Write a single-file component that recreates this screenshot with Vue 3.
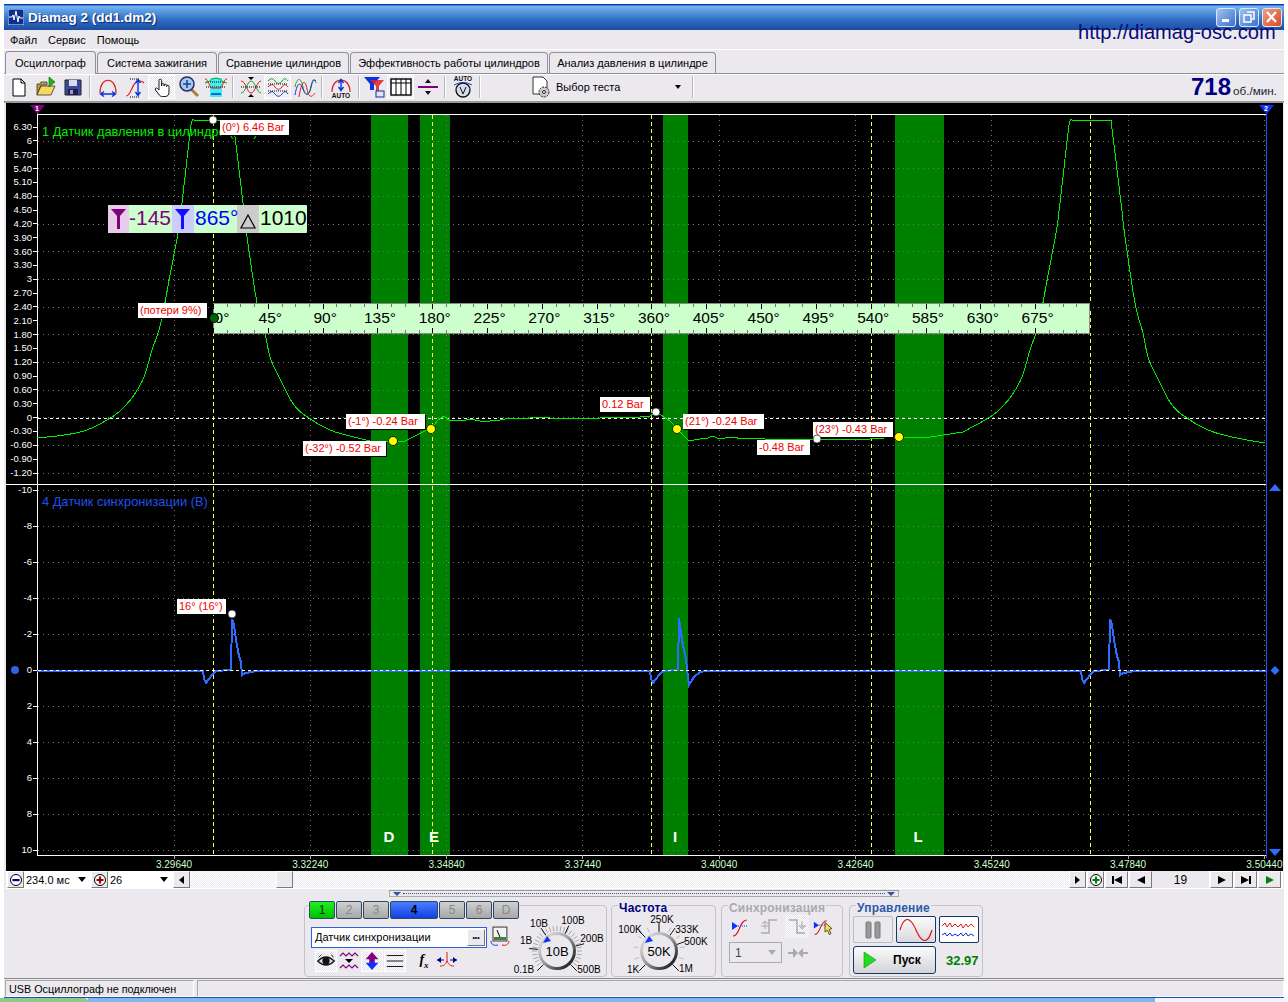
<script setup>
const yTop = ['6.30','6','5.70','5.40','5.10','4.80','4.50','4.20','3.90','3.60','3.30','3','2.70','2.40','2.10','1.80','1.50','1.20','0.90','0.60','0.30','0','-0.30','-0.60','-0.90','-1.20']
  .map((t, i) => ({ t, y: 127 + i * 13.84 }))
const yBot = [-10,-8,-6,-4,-2,0,2,4,6,8,10].map((v, i) => ({ t: String(v), y: 490 + i * 36 }))
const rows = [...Array(13).keys()].map(k => 141 + 27.68 * k).concat([...Array(11).keys()].map(k => 490 + 36 * k))
const xLabels = ['3.29640','3.32240','3.34840','3.37440','3.40040','3.42640','3.45240','3.47840','3.50440'].map((t, i) => ({ t, x: 174 + i * 136.3 }))
const bands = [
  { x: 371, w: 37, t: 'D', lx: 389 },
  { x: 420, w: 30, t: 'E', lx: 434 },
  { x: 663, w: 25, t: 'I', lx: 675 },
  { x: 895, w: 49, t: 'L', lx: 918 }
]
const cursors = [213, 432, 651, 871, 1090]

function smooth(pts) {
  const out = []
  for (let i = 0; i < pts.length - 1; i++) {
    const p0 = pts[Math.max(i - 1, 0)], p1 = pts[i], p2 = pts[i + 1], p3 = pts[Math.min(i + 2, pts.length - 1)]
    for (let s = 0; s < 5; s++) {
      const t = s / 5, t2 = t * t, t3 = t2 * t
      out.push([0, 1].map(c => 0.5 * (2 * p1[c] + (p2[c] - p0[c]) * t + (2 * p0[c] - 5 * p1[c] + 4 * p2[c] - p3[c]) * t2 + (3 * p1[c] - p0[c] - 3 * p2[c] + p3[c]) * t3)))
    }
  }
  out.push(pts[pts.length - 1])
  return out
}
const up = [[112,417],[124,407],[134,395],[144,377],[152,350],[157,336],[162,318],[170,275],[178,233],[182,203],[190,133],[192,121],[194,120]]
const down = [[233,120],[235,137],[243,203],[247,237],[257,303],[265,333],[270,357],[279,377],[294,405],[309,418],[330,430],[354,437],[370,441]]
const shift = (a, d) => a.map(([x, y]) => [x + d, y])
const mid = [[393,441],[405,441],[415,436],[425,431],[431,429],[438,420],[444,416],[450,421],[456,420],[462,421],[470,419],[480,421],[490,421],[500,420],[510,418],[520,419],[530,418],[540,417],[550,418],[580,419],[600,418],[620,417],[640,417],[650,416],[656,412],[664,417],[670,421],[677,428],[683,435],[689,441],[700,439],[708,438],[712,436],[720,439],[730,437],[745,439],[760,438],[765,439],[810,439],[840,439],[870,439],[899,437],[930,437],[963,432]]
const green = [
  ...smooth([[37,438],[64,435],[87,430], ...up]),
  ...smooth(down),
  ...mid,
  ...smooth([[963,432], ...shift(up, 878)]),
  ...smooth([...shift(down, 878).slice(0, 12), [1265,443]])
].map(p => p.map(v => v.toFixed(1)).join(',')).join(' ')
const p1 = [[203,671],[204,679],[206,683],[208,680],[213,674],[216,671],[230,670],[231,669],[232,619],[234,625],[236,640],[239,656],[241,662],[242,675],[245,673],[252,672],[256,671]]
const p2 = [[650,671],[651,679],[653,683],[655,680],[660,674],[663,671],[677,670],[678,669],[679,618],[682,640],[686,660],[689,685],[694,677],[700,672],[706,671]]
const p3 = p1.map(([x, y]) => [x + 878, y])
const blue = [[37,671], ...p1, ...p2, ...p3, [1266,671]].map(p => p.join(',')).join(' ')
const notes = [
  { t: '(0°) 6.46 Bar', x: 220, y: 120, w: 69 },
  { t: '(потери 9%)', x: 138, y: 303, w: 69 },
  { t: '(-1°) -0.24 Bar', x: 346, y: 414, w: 79 },
  { t: '(-32°) -0.52 Bar', x: 303, y: 441, w: 83 },
  { t: '0.12 Bar', x: 600, y: 397, w: 50 },
  { t: '(21°) -0.24 Bar', x: 683, y: 414, w: 81 },
  { t: '-0.48 Bar', x: 757, y: 440, w: 53 },
  { t: '(23°) -0.43 Bar', x: 813, y: 422, w: 80 },
  { t: '16° (16°)', x: 177, y: 599, w: 49 }
]
const whites = [[213,120],[656,412],[817,439],[232,614]]
const yellows = [[393,441],[431,429],[677,429],[899,437]]
const rulerLabels = [...Array(16).keys()].map(k => ({ t: k * 45 + '°', x: k === 0 ? 222 : 215.5 + 54.81 * k }))
const rulerTicks = [...Array(65).keys()].map(k => ({ x: Math.round(213 + 13.703 * k) + 0.5, h: k % 4 === 0 ? 5 : 3, c: k % 4 === 0 ? '#000' : '#777' }))

function tickLine(cx, cy, deg, r1, r2) {
  const a = (deg - 90) * Math.PI / 180
  return { x1: cx + r1 * Math.cos(a), y1: cy + r1 * Math.sin(a), x2: cx + r2 * Math.cos(a), y2: cy + r2 * Math.sin(a) }
}
function range(from, to, n) { return [...Array(n + 1).keys()].map(k => from + (to - from) * k / n) }
const knobs = [
  {
    id: 'k1', x: 510, w: 97, cx: 557, cy: 951, center: '10В', ptr: '547,936 543,943 551,941', minor: range(-135, 135, 30), r1: 20, r2: 25,
    major: [-135, -85, -35, 25, 75, 135], marks: [
      { t: '0.1В', x: 524, y: 973 }, { t: '1В', x: 526, y: 944 }, { t: '10В', x: 539, y: 927 },
      { t: '100В', x: 573, y: 924 }, { t: '200В', x: 592, y: 942 }, { t: '500В', x: 589, y: 973 }
    ]
  },
  {
    id: 'k2', x: 612, w: 103, cx: 659, cy: 951, center: '50K', ptr: '649,936 645,943 653,941', minor: range(-135, 135, 10), r1: 21, r2: 26,
    major: [-135, -45, 0, 35, 70, 135], marks: [
      { t: '100K', x: 630, y: 933 }, { t: '250K', x: 662, y: 923 }, { t: '333K', x: 687, y: 933 },
      { t: '500K', x: 696, y: 945 }, { t: '1K', x: 633, y: 973 }, { t: '1M', x: 686, y: 972 }
    ]
  }
].map(k => ({
  ...k,
  minorLines: k.minor.map(d => tickLine(k.cx, k.cy, d, k.r1, k.r2)),
  majorLines: k.major.map(d => tickLine(k.cx, k.cy, d, 19, 28))
}))
const channels = [
  { t: '1', c: 'on1' }, { t: '2', c: '' }, { t: '3', c: '' }, { t: '4', c: 'on4' },
  { t: '5', c: '' }, { t: '6', c: '' }, { t: 'D', c: '' }
]
</script>

<template>
  <div class="page">
    <div class="window">
      <div class="title">
        <svg class="appicon" width="16" height="16" viewBox="0 0 16 16">
          <rect width="16" height="16" fill="#0b2f8c" stroke="#dfe8f8" stroke-width="1" />
          <path d="M1 8h3l1-2 1 5 2-9 2 11 1-6 1 2h3" fill="none" stroke="#fff" stroke-width="1" />
        </svg>
        <span class="titletext">Diamag 2 (dd1.dm2)</span>
        <div class="winbtns">
          <span class="wb"><svg width="18" height="18" viewBox="0 0 18 18"><rect x="5" y="11" width="7" height="3" fill="#fff" /></svg></span>
          <span class="wb"><svg width="18" height="18" viewBox="0 0 18 18"><path d="M7 4h7v7h-2M4 7h7v7H4z" fill="none" stroke="#fff" stroke-width="1.5" /></svg></span>
          <span class="wb close"><svg width="18" height="18" viewBox="0 0 18 18"><path d="M4 4l9 10M13 4L4 14" stroke="#fff" stroke-width="2.2" /></svg></span>
        </div>
      </div>
      <a class="url">http://diamag-osc.com</a>
      <div class="menu">
        <span>Файл</span><span>Сервис</span><span>Помощь</span>
      </div>
      <div class="tabs">
        <span class="tab active tw1">Осциллограф</span>
        <span class="tab tw2">Система зажигания</span>
        <span class="tab tw3">Сравнение цилиндров</span>
        <span class="tab tw4">Эффективность работы цилиндров</span>
        <span class="tab tw5">Анализ давления в цилиндре</span>
      </div>

      <div class="toolbar">
        <span class="tb"><svg width="24" height="24" viewBox="0 0 24 24"><path d="M6 4h8l4 4v13H6z" fill="#fff" stroke="#000" /><path d="M14 4v4h4" fill="none" stroke="#000" /></svg></span>
        <span class="tb"><svg width="24" height="24" viewBox="0 0 24 24"><path d="M3 20V9h3l1-2h6v3H7z" fill="#c8a030" stroke="#333" stroke-width=".8" /><path d="M3 20l4-9h14l-4 9z" fill="#f8d860" stroke="#333" stroke-width=".8" /><path d="M15 2l6 5-6 5z" fill="#22b020" stroke="#0a600a" stroke-width=".6" /></svg></span>
        <span class="tb"><svg width="24" height="24" viewBox="0 0 24 24"><path d="M4 5h16v15H4z" fill="#3c4a9c" stroke="#222" /><rect x="8" y="5" width="8" height="6" fill="#d8dcf0" /><rect x="7" y="14" width="10" height="6" fill="#1c1c50" /><rect x="9" y="15" width="3" height="4" fill="#a0a0c0" /></svg></span>
        <i class="sep"></i>
        <span class="tb"><svg width="24" height="24" viewBox="0 0 24 24"><path d="M4 18C4 1 20 1 20 18" fill="none" stroke="#e01818" stroke-width="1.2" /><path d="M5 19h14M8 16.5L4.5 19 8 21.5M16 16.5l3.5 2.5-3.5 2.5" fill="none" stroke="#1030e0" stroke-width="1.4" /></svg></span>
        <span class="tb"><svg width="24" height="24" viewBox="0 0 24 24"><path d="M3 21c6 0 5-15 14-15 2 0 3 1 4 2" fill="none" stroke="#e01818" stroke-width="1.2" /><path d="M7 4h10" stroke="#000" stroke-dasharray="1 1" /><path d="M7 22h10" stroke="#000" stroke-dasharray="1 1" /><path d="M15 5v15M12.5 8L15 4.5 17.5 8M12.5 17l2.5 3.5 2.5-3.5" fill="none" stroke="#1030e0" stroke-width="1.4" /></svg></span>
        <span class="tb pressed"><svg width="24" height="24" viewBox="0 0 24 24"><path d="M9 15V5.5a1.3 1.3 0 0 1 2.6 0V11l0-1.5a1.3 1.3 0 0 1 2.5 0V11l0-.8a1.3 1.3 0 0 1 2.5 0v1.3a1.2 1.2 0 0 1 2.4 0V17c0 3-1.5 4.5-4 4.5h-2.5c-2 0-3-1-4-2.5l-3-4c-1-1.5.8-2.8 2-1.5z" fill="#fff" stroke="#000" stroke-width=".9" /></svg></span>
        <span class="tb"><svg width="24" height="24" viewBox="0 0 24 24"><path d="M14 14l7 7" stroke="#a88040" stroke-width="3" /><circle cx="10" cy="9" r="7" fill="#a8c8f0" stroke="#223060" stroke-width="1.5" /><path d="M6 9h8M10 5v8" stroke="#1040a0" stroke-width="1.5" /></svg></span>
        <span class="tb"><svg width="24" height="24" viewBox="0 0 24 24"><path d="M6 3h12v19H6z" fill="#40f0f0" /><path d="M2 7h20M2 12h20" stroke="#000" stroke-dasharray="1 1" /><path d="M1 4c4 0 4 9 7 9h8c3 0 3-9 7-9" fill="none" stroke="#e01818" /><path d="M1 8c5 0 6-5 11-5s6 5 11 5" fill="none" stroke="#18a018" /><path d="M7 19h10" stroke="#1030e0" stroke-width="1.5" /></svg></span>
        <i class="sep"></i>
        <span class="tb"><svg width="24" height="24" viewBox="0 0 24 24"><path d="M2 6c5 0 6 12 10 12s6-12 10-12" fill="none" stroke="#e01818" /><path d="M2 18c5 0 6-12 10-12s6 12 10 12" fill="none" stroke="#18a018" /><path d="M2 12h20" stroke="#000" stroke-dasharray="1 1" /><path d="M9 2h6l-3 3zM9 22h6l-3-3z" fill="#000" /></svg></span>
        <span class="tb pressed"><svg width="24" height="24" viewBox="0 0 24 24"><path d="M2 6c3-3 5-3 7 0s5 3 7 0 4-3 6 0" fill="none" stroke="#18a018" /><path d="M2 12c3-3 5-3 7 0s5 3 7 0 4-3 6 0" fill="none" stroke="#e01818" /><path d="M2 19c3-3 5-3 7 0s5 3 7 0 4-3 6 0" fill="none" stroke="#1030e0" /><path d="M2 9h20M2 16h20" stroke="#000" stroke-dasharray="1 1" /></svg></span>
        <span class="tb"><svg width="24" height="24" viewBox="0 0 24 24"><path d="M2 12C4 2 8 2 10 12s6 10 8 0 3-8 5-4" fill="none" stroke="#18a018" /><path d="M2 20C4 8 7 6 10 14s6 6 8-2 3-8 5-6" fill="none" stroke="#1030e0" /><path d="M6 22C9 4 12 4 14 14s5 8 8 4" fill="none" stroke="#e01818" /></svg></span>
        <i class="sep"></i>
        <span class="tb wide"><svg width="24" height="24" viewBox="0 0 24 24"><path d="M3 17C3 1 21 1 21 17" fill="none" stroke="#e01818" stroke-width="1.2" /><path d="M12 5v10M9.5 8L12 4.5 14.5 8M9.500 12l2.5 3.5 2.5-3.5" fill="none" stroke="#1030e0" stroke-width="1.4" /><text x="12" y="23" class="auto">AUTO</text></svg></span>
        <i class="sep"></i>
        <span class="tb nudge"><svg width="24" height="24" viewBox="0 0 24 24"><path d="M2 2h16l-6 7v6H8V9z" fill="#1030e0" /><path d="M8 5h14l-5 6v8h-3v-8z" fill="#e02020" opacity=".85" /><rect x="14" y="16" width="8" height="6" fill="#dde4f8" stroke="#1030a0" /></svg></span>
        <span class="tb pressed"><svg width="24" height="24" viewBox="0 0 24 24"><rect x="2" y="4" width="20" height="16" fill="#fff" stroke="#000" stroke-width="1.4" /><path d="M2 8h20M7 4v16M12 4v16M17 4v16" stroke="#000" /></svg></span>
        <span class="tb"><svg width="24" height="24" viewBox="0 0 24 24"><rect x="2" y="11" width="20" height="2" fill="#800080" /><path d="M9 8l3-4 3 4zM9 16l3 4 3-4z" fill="#111" /></svg></span>
        <i class="sep"></i>
        <span class="tb"><svg width="24" height="24" viewBox="0 0 24 24"><text x="12" y="6" class="auto">AUTO</text><circle cx="12" cy="15" r="7" fill="#d8dce8" stroke="#111" stroke-width="1.3" /><path d="M9 12l3 7 3-7" fill="none" stroke="#111" /><path d="M3 10q9-5 18 0" fill="none" stroke="#1040d0" /></svg></span>
        <i class="sep"></i>
        <div class="testpick">
          <svg width="22" height="24" viewBox="0 0 22 24"><path d="M3 2h10l4 4v13H3z" fill="#fff" stroke="#333" /><circle cx="14" cy="17" r="5" fill="#ccc" stroke="#222" stroke-dasharray="2 1" /><circle cx="14" cy="17" r="1.5" fill="#fff" stroke="#222" /></svg>
          <span>Выбор теста</span>
          <i class="tri small"></i>
        </div>
        <i class="sep"></i>
        <div class="rpm"><b>718</b><span>об./мин.</span></div>
      </div>

      <svg class="plot" width="1277" height="768" viewBox="6 103 1277 768">
        <rect x="6" y="103" width="1277" height="768" fill="#000" />
        <g v-for="b in bands" :key="b.t">
          <rect :x="b.x" y="114" :width="b.w" height="741" fill="#008000" />
          <text :x="b.lx" y="842" class="bandtext">{{ b.t }}</text>
        </g>
        <g shape-rendering="crispEdges">
          <line v-for="(y, i) in rows" :key="'r' + i" x1="38" x2="1266" :y1="y" :y2="y" class="grid" />
          <line v-for="(l, i) in xLabels" :key="'v' + i" :x1="l.x" :x2="l.x" y1="115" y2="855" class="grid" />
          <line v-for="x in cursors" :key="'c' + x" :x1="x" :x2="x" y1="115" y2="855" class="cursor" />
          <line x1="37" x2="1266" y1="114.5" y2="114.5" stroke="#fff" />
          <line x1="6" x2="1266" y1="484.5" y2="484.5" stroke="#fff" />
          <line x1="37" x2="1266" y1="855.5" y2="855.5" stroke="#fff" />
          <line x1="37.5" x2="37.5" y1="106" y2="855" stroke="#fff" />
          <line x1="1266.5" x2="1266.5" y1="106" y2="858" stroke="#2050ff" />
          <line x1="38" x2="1266" y1="418.5" y2="418.5" class="zero" />
          <line v-for="l in yTop" :key="'t' + l.t" x1="33" x2="37" :y1="l.y" :y2="l.y" stroke="#fff" />
          <line v-for="l in yBot" :key="'b' + l.t" x1="33" x2="37" :y1="l.y" :y2="l.y" stroke="#fff" />
          <line v-for="(l, i) in xLabels" :key="'xt' + i" :x1="l.x" :x2="l.x" y1="855" y2="859" stroke="#aaa" />
        </g>
        <text v-for="l in yTop" :key="'yt' + l.t" :x="32" :y="l.y + 3" class="ylabel">{{ l.t }}</text>
        <text v-for="l in yBot" :key="'yb' + l.t" :x="32" :y="l.y + 3" class="ylabel">{{ l.t }}</text>
        <text v-for="(l, i) in xLabels" :key="'xl' + i" :x="l.x" y="868" class="xlabel">{{ l.t }}</text>

        <text x="42" y="136" class="chgreen">1 Датчик давления в цилиндре (Bar)</text>
        <text x="42" y="506" class="chblue">4 Датчик синхронизации (В)</text>

        <polyline :points="green" fill="none" stroke="#00ee00" shape-rendering="crispEdges" />
        <polyline :points="blue" fill="none" stroke="#2e6bff" stroke-width="2" shape-rendering="crispEdges" />
        <line x1="38" x2="1266" y1="670.5" y2="670.5" class="zero" shape-rendering="crispEdges" />

        <!-- ruler -->
        <rect x="213.5" y="303.5" width="876" height="30" fill="#ccffcc" stroke="#888" shape-rendering="crispEdges" />
        <g shape-rendering="crispEdges">
          <line v-for="(t, i) in rulerTicks" :key="'rt' + i" :x1="t.x" :x2="t.x" y1="304" :y2="304 + t.h" :stroke="t.c" />
          <line v-for="(t, i) in rulerTicks" :key="'rb' + i" :x1="t.x" :x2="t.x" y1="333" :y2="333 - t.h" :stroke="t.c" />
        </g>
        <text v-for="l in rulerLabels" :key="l.t" :x="l.x" y="323" class="rulertext">{{ l.t }}</text>
        <circle cx="214" cy="318" r="4.5" fill="#006400" stroke="#000" />

        <!-- trigger read-out -->
        <g>
          <rect x="108" y="205" width="199" height="28" rx="1" fill="#ccffcc" />
          <rect x="108" y="205" width="21" height="28" fill="#e6cce6" />
          <rect x="172" y="205" width="22" height="28" fill="#ccccff" />
          <rect x="237" y="205" width="22" height="28" fill="#cccccc" />
          <path d="M111 209h15l-6 7v13h-3v-13z" fill="#800080" />
          <path d="M175 209h15l-6 7v13h-3v-13z" fill="#1010ff" />
          <path d="M248 215l7 13h-14z" fill="none" stroke="#000" stroke-width="1.2" />
          <text x="129" y="225" class="bigval" fill="#800080">-145</text>
          <text x="195" y="225" class="bigval" fill="#0000ff">865°</text>
          <text x="260" y="225" class="bigval" fill="#000">1010</text>
        </g>

        <g v-for="n in notes" :key="n.t">
          <rect :x="n.x + 1" :y="n.y + 1" :width="n.w" height="15" fill="#000" />
          <rect :x="n.x" :y="n.y" :width="n.w" height="15" fill="#fff" />
          <text :x="n.x + 2" :y="n.y + 11" class="note">{{ n.t }}</text>
        </g>
        <circle v-for="(p, i) in whites" :key="'w' + i" :cx="p[0]" :cy="p[1]" r="4" fill="#fff" stroke="#000" stroke-width=".6" />
        <circle v-for="(p, i) in yellows" :key="'y' + i" :cx="p[0]" :cy="p[1]" r="4.5" fill="#ffff00" stroke="#000" stroke-width=".8" />

        <!-- channel markers -->
        <path d="M30 105h15l-7.5 9z" fill="#800080" />
        <text x="37" y="111" class="marktext">1</text>
        <path d="M1259 105h15l-7.5 9z" fill="#1030ff" />
        <text x="1266" y="111" class="marktext">2</text>
        <circle cx="15" cy="670" r="4" fill="#3060e0" />
        <path d="M1275 666l4.5 4.5-4.5 4.5-4.5-4.5z" fill="#2e6bff" />
        <path d="M1269 491h12l-6-7z" fill="#2e6bff" />
        <path d="M1269 849h12l-6 7z" fill="#2e6bff" />
      </svg>

      <div class="scrollrow">
        <span class="b3 sq"><svg width="14" height="14" viewBox="0 0 14 14"><circle cx="7" cy="7" r="5.5" fill="#fff" stroke="#000" /><rect x="3.5" y="6" width="7" height="2.2" fill="#000080" /></svg></span>
        <span class="combo c1">234.0 мс<i class="tri"></i></span>
        <span class="b3 sq"><svg width="14" height="14" viewBox="0 0 14 14"><circle cx="7" cy="7" r="5.5" fill="#fff" stroke="#000" /><path d="M3.5 7h7M7 3.5v7" stroke="#a00000" stroke-width="2.2" /></svg></span>
        <span class="combo c2">26<i class="tri"></i></span>
        <span class="b3 sq"><i class="arr l"></i></span>
        <div class="track"><span class="thumb b3"></span></div>
        <span class="b3 sq"><i class="arr r"></i></span>
        <span class="b3 sq gapl"><svg width="14" height="14" viewBox="0 0 14 14"><circle cx="7" cy="7" r="5.5" fill="#fff" stroke="#000" /><path d="M3.5 7h7M7 3.5v7" stroke="#008000" stroke-width="2.2" /></svg></span>
        <span class="b3 nav"><i class="bar"></i><i class="arr l big"></i></span>
        <span class="b3 nav"><i class="arr l big"></i></span>
        <span class="pageno">19</span>
        <span class="b3 nav"><i class="arr r big"></i></span>
        <span class="b3 nav"><i class="arr r big"></i><i class="bar"></i></span>
        <span class="b3 nav"><i class="arr r big g"></i></span>
      </div>

      <div class="splitter"><i class="mini"></i><span></span><i class="mini"></i></div>

      <div class="panels">
        <section class="group g1">
          <div class="chcol">
            <div class="chbtns">
              <span v-for="c in channels" :key="c.t" class="ch" :class="c.c">{{ c.t }}</span>
            </div>
            <div class="chinput">
              <div class="field"><span>Датчик синхронизации</span><span class="dots">•••</span></div>
              <svg width="20" height="22" viewBox="0 0 20 22"><rect x="3" y="1" width="14" height="14" fill="#f4f4f4" stroke="#333" /><rect x="4" y="11" width="12" height="3" fill="#408040" /><path d="M10 11L7 4" stroke="#000" /><path d="M19 15c0 4-4 5-7 4" fill="none" stroke="#e01818" /><path d="M1 15c0 4 4 5 7 4" fill="none" stroke="#1030e0" /></svg>
            </div>
            <div class="chicons">
              <span class="ci pressed"><svg width="22" height="22" viewBox="0 0 22 22"><path d="M2 11q9-9 18 0-9 9-18 0z" fill="#ddd" stroke="#111" stroke-width="1.5" /><circle cx="11" cy="11" r="4" fill="#111" /><path d="M3 7l3-3M19 7l-2-3" stroke="#111" /></svg></span>
              <span class="ci"><svg width="22" height="22" viewBox="0 0 22 22"><path d="M2 6l3-3 3 3 3-3 3 3 3-3 3 3" fill="none" stroke="#800080" stroke-width="1.2" /><path d="M2 18l3-3 3 3 3-3 3 3 3-3 3 3" fill="none" stroke="#800080" stroke-width="1.2" /><path d="M7 9h8l-4 4z" fill="#000" /></svg></span>
              <span class="ci pressed"><svg width="22" height="22" viewBox="0 0 22 22"><path d="M11 1l7 8h-4v3H8V9H4z" fill="#800080" /><path d="M11 21l7-8h-4v-1H8v1H4z" fill="#1030ff" /></svg></span>
              <span class="ci pressed"><svg width="22" height="22" viewBox="0 0 22 22"><path d="M2 5h18M2 11h18M2 17h18" stroke="#000" /></svg></span>
              <span class="ci fx"><i>f<sub>x</sub></i></span>
              <span class="ci"><svg width="22" height="22" viewBox="0 0 22 22"><path d="M1 10h7M21 10h-7" stroke="#000080" /><path d="M5 7l-4 3 4 3zM17 7l4 3-4 3z" fill="#000080" /><path d="M11 2v10" stroke="#e01818" /><path d="M4 16c4 0 5-1 7-5 2 4 3 5 7 5" fill="none" stroke="#e01818" /></svg></span>
            </div>
          </div>
          <svg class="knob" :width="knobs[0].w" height="72" :viewBox="`${knobs[0].x} 905 ${knobs[0].w} 72`">
            <defs>
              <linearGradient id="ring" x1="0" y1="0" x2="1" y2="1">
                <stop offset="0" stop-color="#eeeeee" /><stop offset=".5" stop-color="#999" /><stop offset="1" stop-color="#000" />
              </linearGradient>
            </defs>
            <line v-for="(l, i) in knobs[0].minorLines" :key="i" v-bind="l" stroke="#a8a8a8" />
            <line v-for="(l, i) in knobs[0].majorLines" :key="'m' + i" v-bind="l" stroke="#111" />
            <circle :cx="knobs[0].cx" :cy="knobs[0].cy" r="17.5" fill="#ebe9ed" stroke="url(#ring)" stroke-width="3" />
            <polygon :points="knobs[0].ptr" fill="#1030ff" />
            <text :x="knobs[0].cx" :y="knobs[0].cy + 5" class="kcenter">{{ knobs[0].center }}</text>
            <text v-for="m in knobs[0].marks" :key="m.t" :x="m.x" :y="m.y" class="kmark">{{ m.t }}</text>
          </svg>
        </section>

        <section class="group g2">
          <h4 class="legend navy">Частота</h4>
          <svg class="knob" :width="knobs[1].w" height="72" :viewBox="`${knobs[1].x} 905 ${knobs[1].w} 72`">
            <line v-for="(l, i) in knobs[1].minorLines" :key="i" v-bind="l" stroke="#bbb" />
            <line v-for="(l, i) in knobs[1].majorLines" :key="'m' + i" v-bind="l" stroke="#111" />
            <circle :cx="knobs[1].cx" :cy="knobs[1].cy" r="17.5" fill="#ebe9ed" stroke="url(#ring)" stroke-width="3" />
            <polygon :points="knobs[1].ptr" fill="#1030ff" />
            <text :x="knobs[1].cx" :y="knobs[1].cy + 5" class="kcenter">{{ knobs[1].center }}</text>
            <text v-for="m in knobs[1].marks" :key="m.t" :x="m.x" :y="m.y" class="kmark">{{ m.t }}</text>
          </svg>
        </section>

        <section class="group g3">
          <h4 class="legend gray">Синхронизация</h4>
          <div class="syncicons">
            <span class="si"><svg width="24" height="24" viewBox="0 0 24 24"><path d="M4 22c7 0 6-16 14-16" fill="none" stroke="#e01818" stroke-width="1.2" /><path d="M3 8l6 4-6 4z" fill="#1030ff" /><path d="M9 12h10" stroke="#1030ff" stroke-dasharray="1 1" /></svg></span>
            <span class="si"><svg width="24" height="24" viewBox="0 0 24 24"><path d="M4 19h8V6h8" fill="none" stroke="#aaa" stroke-width="1.5" /><path d="M4 12h7M8 7v8M5 10l3-3 3 3" fill="none" stroke="#aaa" /></svg></span>
            <span class="si pressed"><svg width="24" height="24" viewBox="0 0 24 24"><path d="M4 6h8v13h8" fill="none" stroke="#aaa" stroke-width="1.5" /><path d="M14 12h7M17 7v8M14 12l3 3 3-3" fill="none" stroke="#aaa" /></svg></span>
            <span class="si"><svg width="28" height="24" viewBox="0 0 28 24"><path d="M2 22c7 0 6-16 14-16" fill="none" stroke="#e01818" stroke-width="1.2" /><path d="M1 7l6 4-6 4z" fill="#1030ff" /><path d="M7 11h10" stroke="#1030ff" stroke-dasharray="1 1" /><path d="M14 8l8 7-3 1 2 5-2 1-2-5-3 2z" fill="#ffe040" stroke="#111" stroke-width=".8" /></svg></span>
          </div>
          <div class="syncrow">
            <span class="dis-combo">1<i class="tri gray"></i></span>
            <svg width="20" height="12" viewBox="0 0 20 12"><path d="M0 6h6M20 6h-6" stroke="#aaa" stroke-width="2" /><path d="M5 1l5 5-5 5zM15 1l-5 5 5 5z" fill="#aaa" /></svg>
          </div>
        </section>

        <section class="group g4">
          <h4 class="legend blue">Управление</h4>
          <div class="ctlrow">
            <span class="cb plain"><svg width="18" height="20" viewBox="0 0 18 20"><rect x="2" y="2" width="5" height="16" rx="1" fill="#999" stroke="#777" /><rect x="11" y="2" width="5" height="16" rx="1" fill="#999" stroke="#777" /></svg></span>
            <span class="cb sel"><svg width="34" height="22" viewBox="0 0 34 22"><path d="M1 11C5-3 11-3 17 11s12 14 16 0" fill="none" stroke="#e01818" stroke-width="1.2" /></svg></span>
            <span class="cb sel white"><svg width="36" height="22" viewBox="0 0 36 22"><path d="M1 7l3-3 2 4 3-4 2 4 3-3 3 3 3-3 2 4 3-4 2 3 3-3 3 3" fill="none" stroke="#e01818" /><path d="M1 16l3-2 2 3 3-3 2 3 3-2 3 2 3-3 2 3 3-3 2 3 3-2 3 2" fill="none" stroke="#1030e0" /></svg></span>
          </div>
          <div class="ctlrow second">
            <span class="start"><svg width="14" height="18" viewBox="0 0 14 18"><path d="M1 1l12 8-12 8z" fill="#22dd22" stroke="#0a900a" stroke-width=".6" /></svg><b>Пуск</b></span>
            <span class="timer">32.97</span>
          </div>
        </section>
      </div>

      <div class="status">
        <span class="cell first">USB Осциллограф не подключен</span>
        <span class="cell rest"></span>
      </div>
    </div>
    <div class="taskbar"><i></i><span></span></div>
  </div>
</template>

<style>
html, body { margin: 0; background: #fff; }
</style>

<style scoped>
.page {
  width: 1288px; height: 1002px; box-sizing: border-box; padding: 4px 4px 0;
  background: #fff; overflow: hidden; position: relative;
  font-family: "Liberation Sans", Arial, sans-serif; font-size: 11px; color: #000;
}
.window { width: 1280px; height: 993px; background: #ebe9ed; position: relative; border-bottom: 1px solid #1f4fb8; box-sizing: content-box; }
.title {
  height: 26px; display: flex; align-items: center; padding-left: 4px; box-sizing: border-box;
  background: linear-gradient(#0a3fb8 0, #0a3fb8 1px, #7ab6ee 2px, #5fa0e4 6px, #2e6cc4 16px, #1c4da0 26px);
}
.appicon { margin-right: 4px; }
.titletext { color: #fff; font-weight: bold; font-size: 13.5px; text-shadow: 1px 1px 1px #0a2a70; }
.winbtns { margin-left: auto; display: flex; gap: 3px; margin-right: 2px; }
.wb { width: 20px; height: 19px; border: 1px solid #dce8f8; border-radius: 3px; background: linear-gradient(135deg, #a0c4f0, #3c70cc); box-sizing: border-box; display: flex; align-items: center; justify-content: center; }
.wb.close { background: linear-gradient(135deg, #f0a088, #d84820); }
.url {
  position: absolute; left: 1074px; top: 17px; color: #0a0a78; font-size: 20.1px; line-height: 22px; white-space: nowrap;
}
.menu { height: 20px; display: flex; align-items: center; gap: 11px; padding-left: 6px; border-bottom: 1px solid #fff; box-sizing: border-box; }
.tabs { height: 24px; display: flex; padding-left: 1px; border-bottom: 1px solid #8f9098; box-sizing: border-box; align-items: flex-end; }
.tab {
  height: 21px; box-sizing: border-box; border: 1px solid #919199; border-bottom: 0; border-radius: 4px 4px 0 0;
  display: flex; align-items: center; justify-content: center; margin-right: 1px; background: #ebe9ed; white-space: nowrap;
}
.tab.active { height: 23px; margin-bottom: -1px; background: #ebe9ed; position: relative; z-index: 1; border-right-color: #919199; }
.tw1 { width: 91px; } .tw2 { width: 120px; } .tw3 { width: 131px; } .tw4 { width: 198px; } .tw5 { width: 167px; }
.toolbar { height: 29px; display: flex; align-items: center; padding: 0 0 2px 1px; box-sizing: border-box; border-top: 1px solid #fff; border-bottom: 2px solid #999; }
.tb { width: 27px; height: 24px; display: flex; align-items: center; justify-content: center; box-sizing: border-box; flex: none; }
.tb.wide { width: 29px; }
.tb.nudge { margin-left: -3px; }
.pressed {
  border: 1px solid #fff; box-sizing: border-box;
  background: repeating-conic-gradient(#fff 0 25%, #e4e2e8 0 50%) 0 0 / 2px 2px;
}
.sep { width: 1px; height: 22px; background: #b8b6bc; border-right: 1px solid #fff; margin: 0 3px; flex: none; }
.auto { font-size: 6.5px; font-weight: bold; text-anchor: middle; fill: #111; font-family: "Liberation Sans", sans-serif; }
.testpick { width: 205px; display: flex; align-items: center; padding-left: 46px; box-sizing: border-box; gap: 4px; flex: none; }
.testpick span { flex: 1; }
.tri { width: 0; height: 0; border-left: 4px solid transparent; border-right: 4px solid transparent; border-top: 5px solid #000; display: inline-block; flex: none; }
.tri.small { border-left-width: 3px; border-right-width: 3px; border-top-width: 4px; margin-right: 8px; }
.tri.gray { border-top-color: #aaa; }
.rpm { margin-left: auto; display: flex; align-items: baseline; padding-right: 7px; color: #000080; }
.rpm b { font-size: 24px; margin-right: 2px; }
.rpm span { color: #223; font-size: 11.7px; }

.plot { display: block; margin-left: 2px; }
.grid { stroke: #777; stroke-dasharray: 1 4; }
.cursor { stroke: #ffff40; stroke-dasharray: 4 3; }
.zero { stroke: #fff; stroke-dasharray: 3 3; }
text { font-family: "Liberation Sans", Arial, sans-serif; }
.ylabel { fill: #fff; font-size: 9.5px; text-anchor: end; }
.xlabel { fill: #ccffcc; font-size: 10px; text-anchor: middle; }
.bandtext { fill: #fff; font-size: 15px; font-weight: bold; text-anchor: middle; }
.chgreen { fill: #00ee00; font-size: 12.8px; }
.chblue { fill: #2050e8; font-size: 12.8px; }
.rulertext { fill: #000; font-size: 15.5px; text-anchor: middle; }
.bigval { font-size: 21px; }
.note { fill: #f00000; font-size: 11px; }
.marktext { fill: #fff; font-size: 7px; font-weight: bold; text-anchor: middle; }
.kmark { fill: #000; font-size: 10px; text-anchor: middle; }
.kcenter { fill: #000; font-size: 13px; text-anchor: middle; }

.scrollrow { height: 18px; background: #fff; display: flex; align-items: stretch; margin-left: 2px; width: 1277px; padding-right: 2px; border-bottom: 1px solid #fff; box-sizing: border-box; }
.b3 { border: 1px solid; border-color: #fff #7c7c7c #7c7c7c #fff; background: #ebe9ed; box-sizing: border-box; display: flex; align-items: center; justify-content: center; flex: none; }
.sq { width: 17px; }
.scrollrow > .sq:first-child { margin-left: 1px; }
.combo { display: flex; align-items: center; justify-content: space-between; padding: 0 5px 0 2px; box-sizing: border-box; flex: none; }
.c1 { width: 67px; } .c2 { width: 65px; }
.track { flex: 1; background: repeating-conic-gradient(#fff 0 25%, #ecebee 0 50%) 0 0 / 2px 2px; display: flex; }
.thumb { width: 17px; margin-left: 86px; }
.arr { width: 0; height: 0; border-top: 4px solid transparent; border-bottom: 4px solid transparent; display: inline-block; }
.arr.l { border-right: 5px solid #000; }
.arr.r { border-left: 5px solid #000; }
.arr.big.l { border-right-width: 8px; }
.arr.big.r { border-left-width: 8px; }
.arr.g { border-left-color: #008000 !important; }
.bar { width: 2px; height: 8px; background: #000; display: inline-block; }
.gapl { margin-left: 1px; }
.nav { width: 23px; margin-left: 1px; }
.pageno { width: 57px; background: #ebe9ed; display: flex; align-items: center; justify-content: center; font-size: 12px; flex: none; }

.splitter { margin: 1px 0 0 385px; width: 510px; height: 7px; border: 1px solid #aaa; border-top-color: #999; box-sizing: border-box; display: flex; align-items: center; padding: 0 3px; gap: 2px; }
.splitter span { flex: 1; border-top: 1px dotted #3050a0; }
.mini { width: 0; height: 0; border-left: 4px solid transparent; border-right: 4px solid transparent; border-top: 4px solid #3050a0; }

.panels { display: flex; height: 72px; padding-left: 300px; margin-top: 8px; }
.group { position: relative; border: 1px solid #c4c3c8; border-radius: 4px; box-sizing: border-box; height: 72px; }
.g1 { width: 303px; display: flex; margin-right: 4px; }
.g2 { width: 105px; margin-right: 5px; }
.g3 { width: 122px; margin-right: 6px; padding: 0 0 0 7px; }
.g4 { width: 134px; padding: 10px 3px 0; }
.legend { position: absolute; margin: 0; top: -4px; left: 6px; padding: 0 1px; background: #ebe9ed; font-size: 12px; letter-spacing: .2px; font-weight: bold; line-height: 13px; z-index: 1; }
.navy { color: #000080; }
.gray { color: #aaa; }
.blue { color: #2a5aaa; }
.knob { display: block; position: relative; }
.g2 .knob { margin: -1px 0 0 0; }
.g1 .knob { margin: -1px -1px 0 auto; }
.chcol { width: 205px; flex: none; padding-left: 4px; box-sizing: border-box; }
.chbtns { display: flex; gap: 1px; margin-top: -5px; width: 215px; position: relative; }
.ch {
  width: 26px; height: 18px; flex: none; border: 1px solid #2a4a6a; border-radius: 2px; box-sizing: border-box;
  display: flex; align-items: center; justify-content: center; font-size: 12px; color: #888;
  background: linear-gradient(#d0d0d0, #a8a8a8);
}
.ch.on1 { background: linear-gradient(#22f022, #00c000); color: #003000; }
.ch.on4 { width: 48px; background: linear-gradient(#4a80ff, #1040e0); color: #000; font-weight: bold; }
.chinput { display: flex; align-items: center; margin-top: 7px; padding-left: 2px; gap: 3px; }
.field { width: 177px; height: 21px; border: 1px solid #2e62d8; background: #fff; box-sizing: border-box; display: flex; align-items: center; justify-content: space-between; padding-left: 3px; font-size: 11px; }
.dots { width: 18px; height: 17px; margin-right: 1px; border: 1px solid; border-color: #fff #777 #777 #fff; background: #ebe9ed; font-size: 7px; display: flex; align-items: center; justify-content: center; box-sizing: border-box; }
.chicons { display: flex; padding-left: 6px; margin-top: 2px; gap: 0; }
.ci { width: 22px; height: 22px; display: flex; align-items: center; justify-content: center; box-sizing: border-box; margin-right: 1px; }
.fx { font-family: "Liberation Serif", serif; font-weight: bold; font-size: 14px; margin-left: 6px; }
.fx sub { font-size: 9px; }
.syncicons { display: flex; gap: 4px; margin-top: 8px; align-items: center; }
.si { width: 24px; height: 24px; display: flex; align-items: center; justify-content: center; box-sizing: border-box; }
.si.pressed { border: 0; }
.syncrow { display: flex; align-items: center; gap: 6px; margin-top: 4px; }
.dis-combo { width: 53px; height: 21px; border: 1px solid #aaa; box-sizing: border-box; display: flex; align-items: center; justify-content: space-between; padding: 0 5px; font-size: 12px; color: #444; }
.ctlrow { display: flex; gap: 3px; }
.ctlrow.second { margin-top: 3px; align-items: center; }
.cb { width: 40px; height: 27px; box-sizing: border-box; display: flex; align-items: center; justify-content: center; border-radius: 2px; }
.plain { border: 1px solid #bcbcbc; }
.sel { border: 1px solid #113a6a; background: linear-gradient(#fbfbfc, #d9d8dd); }
.white { background: #fff; }
.start { width: 83px; height: 28px; box-sizing: border-box; border: 1px solid #113a6a; border-radius: 3px; background: linear-gradient(#fbfbfc, #d4d3d8); display: flex; align-items: center; padding-left: 9px; gap: 16px; font-size: 12px; }
.timer { color: #008000; font-size: 13px; font-weight: bold; margin-left: 7px; }
.status { display: flex; margin-top: 1px; height: 19px; border-top: 1px solid #8a8a8a; box-sizing: border-box; padding-top: 1px; font-size: 10.8px; }
.cell { border: 1px solid; border-color: #a8a8a8 #fff #fff #a8a8a8; box-sizing: border-box; height: 17px; display: flex; align-items: center; padding-left: 3px; }
.first { width: 189px; margin-left: 1px; }
.rest { flex: 1; margin-left: 3px; }
.taskbar { height: 5px; display: flex; margin: 0 -4px; background: #eef6fc; }
.taskbar i { width: 88px; background: #8cc88c; border-radius: 0 4px 0 0; }
.taskbar span { width: 1067px; background: #80b8e8; }
</style>
